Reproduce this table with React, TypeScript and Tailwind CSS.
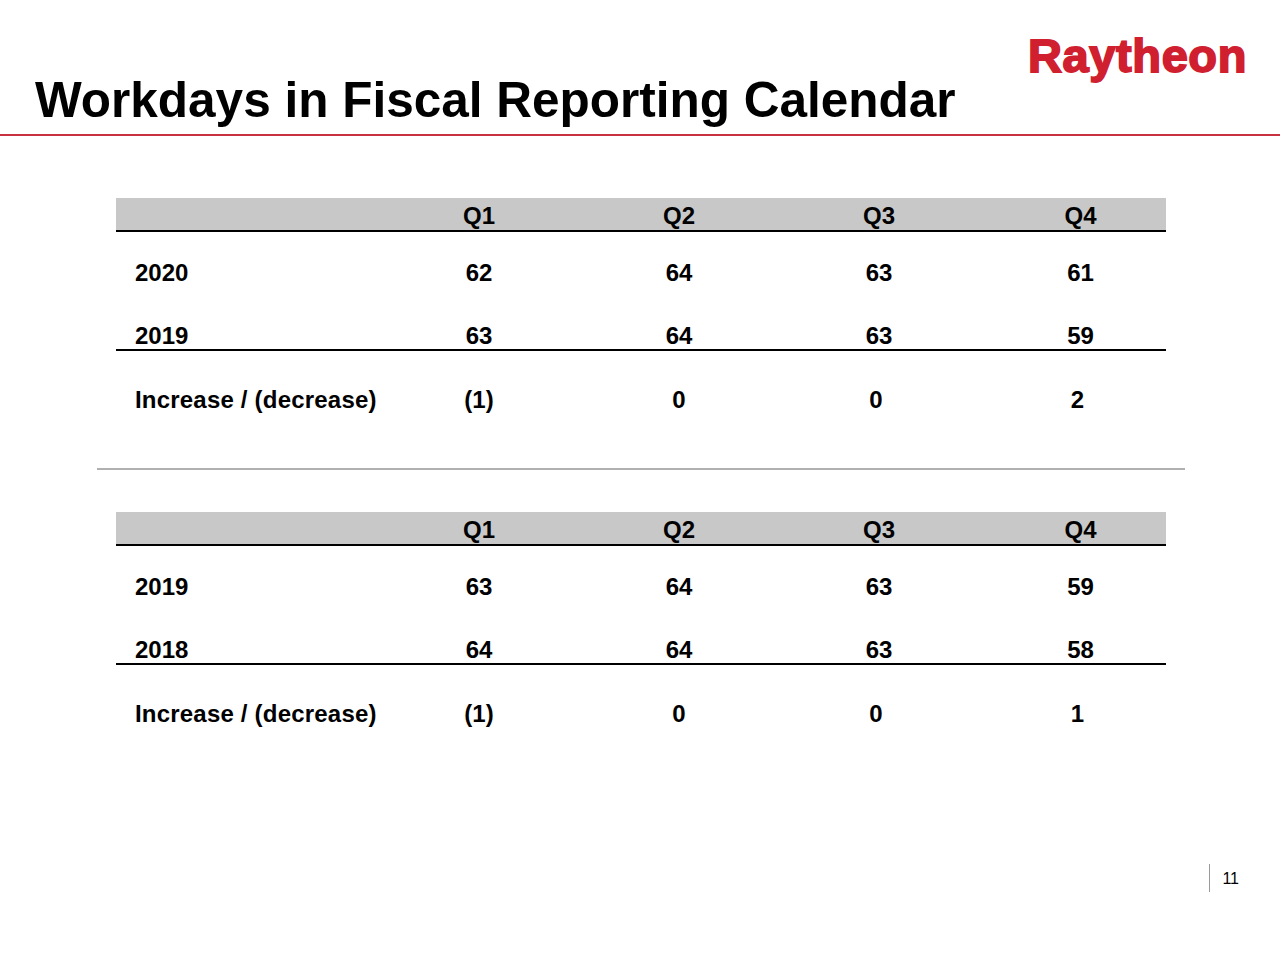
import React from "react";

type Row = { label: string; values: string[]; border?: boolean };

function Table({ rows }: { rows: Row[] }) {
  const cols = "grid grid-cols-[263px_200px_200px_200px_187px]";
  return (
    <div className="ml-[116px] w-[1050px] text-[24px] font-bold text-black">
      <div className={`${cols} h-[34px] bg-[#c8c8c8] border-b-2 border-black pt-[3px] leading-[29px]`}>
        <div />
        <div className="text-center">Q1</div>
        <div className="text-center">Q2</div>
        <div className="text-center">Q3</div>
        <div className="text-center pl-[16px]">Q4</div>
      </div>
      <div className={`${cols} h-[53px] items-end leading-[24px]`}>
        <div className="pl-[19px]">{rows[0].label}</div>
        {rows[0].values.map((v, i) => (
          <div key={i} className={i === 3 ? "text-center pl-[16px]" : "text-center"}>
            {v}
          </div>
        ))}
      </div>
      <div className={`${cols} h-[66px] items-end leading-[24px] pb-[1px] border-b-2 border-black`}>
        <div className="pl-[19px]">{rows[1].label}</div>
        {rows[1].values.map((v, i) => (
          <div key={i} className={i === 3 ? "text-center pl-[16px]" : "text-center"}>
            {v}
          </div>
        ))}
      </div>
      <div className={`${cols} h-[61px] items-end leading-[24px]`}>
        <div className="pl-[19px] tracking-[0.2px]">{rows[2].label}</div>
        {rows[2].values.map((v, i) => (
          <div
            key={i}
            className={
              i === 3
                ? "text-center pl-[10px]"
                : i === 2
                ? "text-center pr-[6px]"
                : "text-center"
            }
          >
            {v}
          </div>
        ))}
      </div>
    </div>
  );
}

export default function App() {
  return (
    <div className="w-[1280px] h-[960px] bg-white overflow-hidden font-['Liberation_Sans',Arial,Helvetica,sans-serif] text-black">
      <div className="flex justify-between h-[134px]">
        <h1 className="pl-[35px] pt-[75px] text-[49.5px] leading-none font-bold whitespace-nowrap">
          Workdays in Fiscal Reporting Calendar
        </h1>
        <div className="pr-[33px] pt-[32px] text-[47px] leading-none font-bold text-[#d0202f] tracking-[0.6px] [-webkit-text-stroke:1.8px_#d0202f]">
          Raytheon
        </div>
      </div>
      <div className="h-[2px] bg-[#c8313f]" />

      <div className="mt-[62px]">
        <Table
          rows={[
            { label: "2020", values: ["62", "64", "63", "61"] },
            { label: "2019", values: ["63", "64", "63", "59"] },
            { label: "Increase / (decrease)", values: ["(1)", "0", "0", "2"] },
          ]}
        />
      </div>

      <div className="mt-[56px] ml-[97px] w-[1088px] h-[2px] bg-[#b0b0b0]" />

      <div className="mt-[42px]">
        <Table
          rows={[
            { label: "2019", values: ["63", "64", "63", "59"] },
            { label: "2018", values: ["64", "64", "63", "58"] },
            { label: "Increase / (decrease)", values: ["(1)", "0", "0", "1"] },
          ]}
        />
      </div>

      <div className="mt-[138px] flex justify-end items-start pr-[41px]">
        <div className="w-px h-[28px] bg-[#9a9a9a]" />
        <div className="ml-[12px] mt-[7px] text-[16px] leading-none">11</div>
      </div>
    </div>
  );
}
